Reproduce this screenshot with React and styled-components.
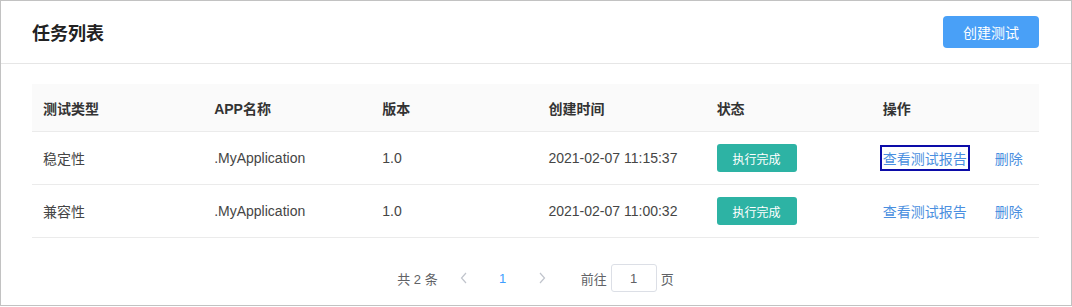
import React from "react";
import styled, { createGlobalStyle } from "styled-components";

const GlobalStyle = createGlobalStyle`
  body {
    margin: 0;
    background: #fff;
    font-family: "Liberation Sans", "Noto Sans CJK SC", sans-serif;
  }
`;

const Frame = styled.div`
  width: 1072px;
  height: 306px;
  box-sizing: border-box;
  border: 1px solid #c2c2c2;
  background: #fff;
`;

const Header = styled.div`
  height: 62px;
  display: flex;
  align-items: center;
  justify-content: space-between;
  padding: 0 32px 0 31px;
  border-bottom: 1px solid #e6e6e6;
`;

const Title = styled.h1`
  margin: 0;
  font-size: 18px;
  font-weight: bold;
  color: #222;
`;

const PrimaryButton = styled.button`
  width: 96px;
  height: 32px;
  border: none;
  border-radius: 4px;
  background: #49a0f7;
  color: #fff;
  font-family: inherit;
  font-size: 14px;
  cursor: pointer;
`;

const Body = styled.div`
  padding: 20px 32px 0 31px;
`;

const Table = styled.table`
  width: 100%;
  border-collapse: collapse;
  table-layout: fixed;
`;

const Col = styled.col`
  width: ${(p) => p.w}px;
`;

const Th = styled.th`
  height: 47px;
  padding: 0 11px;
  text-align: left;
  background: #fafafa;
  border-bottom: 1px solid #ebebeb;
  font-size: 14px;
  font-weight: bold;
  color: #333;
`;

const Td = styled.td`
  height: 52px;
  padding: 0 11px;
  border-bottom: 1px solid #ebebeb;
  font-size: 14px;
  color: #454545;
`;

const Badge = styled.span`
  display: inline-flex;
  align-items: center;
  justify-content: center;
  width: 80px;
  height: 28px;
  border-radius: 3px;
  background: #2db3a4;
  color: #fff;
  font-size: 12px;
`;

const Actions = styled.div`
  display: flex;
  gap: 28px;
`;

const Link = styled.a`
  color: #4a8fe0;
  font-size: 14px;
  text-decoration: none;
  cursor: pointer;
  outline: ${(p) => (p.focused ? "2px solid #0c0ca8" : "none")};
  outline-offset: 1px;
`;

const Pager = styled.div`
  display: flex;
  align-items: center;
  justify-content: center;
  margin-top: 26px;
  height: 28px;
  font-size: 13px;
  color: #606266;
`;

const Total = styled.span`
  margin-right: 13px;
`;

const Arrow = styled.span`
  display: inline-flex;
  width: 26px;
  justify-content: center;
  color: #c0c4cc;
`;

const PageNum = styled.span`
  width: 52px;
  text-align: center;
  color: #409eff;
`;

const Jump = styled.span`
  margin-left: 26px;
  display: flex;
  align-items: center;
  gap: 4px;
`;

const PageInput = styled.input`
  width: 46px;
  height: 28px;
  box-sizing: border-box;
  border: 1px solid #dcdfe6;
  border-radius: 3px;
  text-align: center;
  font-family: inherit;
  font-size: 13px;
  color: #606266;
  outline: none;
`;

const Chevron = ({ dir }) => (
  <svg width="8" height="12" viewBox="0 0 8 12">
    <polyline
      points={dir === "left" ? "6,1 1.5,6 6,11" : "2,1 6.5,6 2,11"}
      fill="none"
      stroke="currentColor"
      strokeWidth="1.2"
    />
  </svg>
);

const colWidths = [171, 168, 166, 168, 166, 167];

const rows = [
  { type: "稳定性", app: ".MyApplication", ver: "1.0", time: "2021-02-07 11:15:37" },
  { type: "兼容性", app: ".MyApplication", ver: "1.0", time: "2021-02-07 11:00:32" },
];

const App = () => (
  <>
    <GlobalStyle />
    <Frame>
      <Header>
        <Title>任务列表</Title>
        <PrimaryButton>创建测试</PrimaryButton>
      </Header>
      <Body>
        <Table>
          <colgroup>
            {colWidths.map((w, i) => (
              <Col key={i} w={w} />
            ))}
          </colgroup>
          <thead>
            <tr>
              <Th>测试类型</Th>
              <Th>APP名称</Th>
              <Th>版本</Th>
              <Th>创建时间</Th>
              <Th>状态</Th>
              <Th>操作</Th>
            </tr>
          </thead>
          <tbody>
            {rows.map((r, i) => (
              <tr key={i}>
                <Td>{r.type}</Td>
                <Td>{r.app}</Td>
                <Td>{r.ver}</Td>
                <Td>{r.time}</Td>
                <Td>
                  <Badge>执行完成</Badge>
                </Td>
                <Td>
                  <Actions>
                    <Link focused={i === 0 ? 1 : 0}>查看测试报告</Link>
                    <Link>删除</Link>
                  </Actions>
                </Td>
              </tr>
            ))}
          </tbody>
        </Table>
        <Pager>
          <Total>共 2 条</Total>
          <Arrow>
            <Chevron dir="left" />
          </Arrow>
          <PageNum>1</PageNum>
          <Arrow>
            <Chevron dir="right" />
          </Arrow>
          <Jump>
            前往
            <PageInput defaultValue="1" />
            页
          </Jump>
        </Pager>
      </Body>
    </Frame>
  </>
);

export default App;
